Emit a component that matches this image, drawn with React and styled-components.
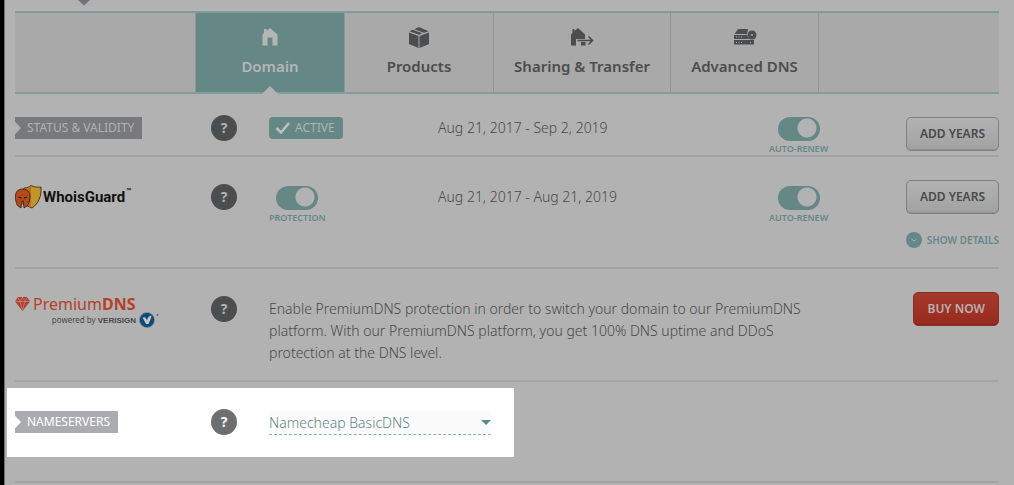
import styled, { createGlobalStyle } from 'styled-components';

const GlobalStyle = createGlobalStyle`
  * {
    box-sizing: border-box;
  }

  body {
    margin: 0;
    background-color: #b2b2b2;
    color: #48494b;
    font-family: 'Noto Sans', 'Open Sans', sans-serif;
    font-size: 14px;
    font-weight: 300;
    line-height: 22px;
  }
`;

const Page = styled.div`
  min-height: 100vh;
  padding: 0 15px 0 11px;
  border-left: 4px solid #000;
  box-shadow: inset 1px 0 0 #6e6e6e;
`;

const Header = styled.div`
  height: 11px;
  padding-left: 62px;

  svg {
    display: block;
  }
`;

const Tabs = styled.nav`
  display: grid;
  grid-template-columns: 181px 149px 149px 177px 148px 1fr;
  height: 83px;
  border-top: 2px solid #809b9a;
  border-bottom: 2px solid #809b9a;
  background-color: #a9a9a9;
`;

const Tab = styled.a`
  position: relative;
  display: flex;
  flex-direction: column;
  align-items: center;
  gap: 6px;
  padding-top: 12px;
  border-right: 1px solid #949696;
  background-color: ${({ $active }) => ($active ? '#658887' : 'transparent')};
  color: ${({ $active }) => ($active ? '#b4b6b6' : '#4c4d4f')};
  font-size: 15px;
  font-weight: 600;
  text-decoration: none;
  white-space: nowrap;

  &::after {
    content: '';
    display: ${({ $active }) => ($active ? 'block' : 'none')};
    position: absolute;
    bottom: -2px;
    border: 8px solid transparent;
    border-top: 0;
    border-bottom-color: #b2b2b2;
  }
`;

const TabIcon = styled.span`
  display: flex;
  align-items: center;
  height: 24px;
`;

const Row = styled.section`
  display: grid;
  grid-template-columns: ${({ $columns }) =>
    $columns || '196px 58px 169px 331px 1fr'};
  min-height: ${({ $height }) => $height};
  padding-top: ${({ $top }) => $top || '23px'};
  border-bottom: 2px solid #a4a4a4;
`;

const Cell = styled.div`
  display: flex;
  align-items: center;
  height: 34px;
`;

const Actions = styled.div`
  display: flex;
  flex-direction: column;
  align-items: flex-end;
  gap: 18px;
  padding-top: ${({ $top }) => $top || 0};
`;

const Side = styled.div`
  display: flex;
  justify-content: space-between;
`;

const Tag = styled.h2`
  margin: 0;
  padding: 0 8px 0 12px;
  background-color: ${({ $lit }) => ($lit ? '#abacb0' : '#78797c')};
  color: ${({ $lit }) => ($lit ? '#fff' : '#b2b2b2')};
  clip-path: polygon(0 0, 100% 0, 100% 100%, 0 100%, 0 78%, 6px 50%, 0 22%);
  font-size: 12px;
  font-weight: 400;
`;

const Help = styled.button`
  width: 26px;
  height: 26px;
  padding: 0;
  border: 0;
  border-radius: 50%;
  background-color: ${({ $lit }) => ($lit ? '#6d6e70' : '#4c4d4f')};
  color: ${({ $lit }) => ($lit ? '#fff' : '#b2b2b2')};
  font: 700 14px/26px 'Noto Sans', sans-serif;
`;

const Badge = styled.span`
  display: flex;
  align-items: center;
  gap: 4px;
  height: 22px;
  padding: 0 8px 0 6px;
  border-radius: 4px;
  background-color: #658887;
  color: #b2b2b2;
  font-size: 12px;
  font-weight: 400;
`;

const Switch = styled.label`
  display: flex;
  flex-direction: column;
  align-items: center;
  align-self: start;
  gap: 2px;
  width: max-content;
  padding-top: 6px;
  color: #658887;
  font-size: 9px;
  font-weight: 600;
  line-height: 12px;
`;

const SwitchInput = styled.input`
  appearance: none;
  width: 42px;
  height: 24px;
  margin: 0;
  border-radius: 12px;
  background: radial-gradient(circle at 29px 11px, #b2b2b2 9px, #658887 10px);
`;

const Button = styled.button`
  height: 34px;
  padding: 0 13px;
  border: ${({ $primary }) => ($primary ? '1px solid #8c2b20' : '1px solid #7f7f7f')};
  border-radius: 5px;
  background: ${({ $primary }) =>
    $primary
      ? 'linear-gradient(#a43a2c, #962a1e)'
      : 'linear-gradient(#b2b2b2, #a2a2a2)'};
  box-shadow: inset 0 -1px 0 rgba(0, 0, 0, 0.1);
  color: ${({ $primary }) => ($primary ? '#b8b0b0' : '#48494b')};
  font: 600 12px/28px 'Noto Sans', sans-serif;
`;

const DetailsButton = styled.button`
  display: flex;
  align-items: center;
  gap: 5px;
  height: 16px;
  padding: 0;
  border: 0;
  background: none;
  color: #658887;
  font: 600 10px 'Noto Sans', sans-serif;
`;

const Description = styled.p`
  max-width: 560px;
  margin: 0;
  padding-top: 6px;
`;

const GuardLogo = styled.div`
  display: flex;
  align-items: center;
  gap: 1px;
  color: #111;
  font: 700 15px/22px Roboto, sans-serif;

  sup {
    align-self: start;
    font-size: 8px;
    line-height: 14px;
  }
`;

const PremiumLogo = styled.div`
  width: 144px;
  padding-top: 6px;
  color: #b5402a;
  font-weight: 400;
`;

const PremiumName = styled.div`
  display: flex;
  align-items: center;
  gap: 3px;
  font-size: 16px;
  line-height: 16px;
`;

const PoweredBy = styled.div`
  display: flex;
  align-items: center;
  justify-content: flex-end;
  gap: 3px;
  height: 16px;
  color: #48494b;
  font-size: 8px;
  line-height: 16px;

  b {
    font-family: 'Liberation Sans', sans-serif;
  }
`;

const Spotlight = styled.div`
  display: grid;
  grid-template-columns: 196px 58px 222px;
  width: max-content;
  height: 69px;
  margin-left: -8px;
  padding: 17px 23px 0 8px;
  background-color: #fff;
`;

const LastRow = styled.section`
  height: 101px;
  padding-top: 6px;
  border-bottom: 2px solid #a4a4a4;
`;

const SelectWrap = styled.div`
  display: flex;
  align-items: center;
  align-self: start;
  height: 30px;
  padding-top: 6px;
  border-bottom: 1px dashed #8fb0ae;
  background: #fbfbfb content-box;
`;

const Select = styled.select`
  appearance: none;
  flex: 1;
  height: 22px;
  padding: 0;
  border: 0;
  background: none;
  color: #5d8886;
  font: 300 14px/22px 'Noto Sans', sans-serif;
`;

function HomeIcon() {
  return (
    <svg width='16' height='18' viewBox='0 0 16 18' fill='currentColor'>
      <path d='M8 0 15.500 6.500V17.500h-5V9.500h-5v8h-5V6.500L2 5V1h2.500v2z' />
    </svg>
  );
}

function BoxIcon() {
  return (
    <svg width='22' height='22' viewBox='0 0 22 22' fill='currentColor'>
      <path d='M1 6.500 10.500 10v12L1 18zM11.500 10 21 6.500V18l-9.500 4zM1.500 5.200 4.800 3.800l9.500 3.500-3.300 1.400zM6.200 3.200 11 1l9.500 4.200-4.500 1.600z' />
    </svg>
  );
}

function TransferIcon() {
  return (
    <svg width='24' height='18' viewBox='0 0 24 18' fill='currentColor'>
      <path d='M8 0 15 6.500V11H6v6.500H1v-11L2.500 5V1h2v2zM11 14h4.500v3.500H11z' />
      <path d='M7.500 12.500h15M18.500 8.500l4 4-4 4' fill='none' stroke='currentColor' strokeWidth='1.600' />
    </svg>
  );
}

function ServerIcon() {
  return (
    <svg width='24' height='18' viewBox='0 0 24 18' fill='currentColor'>
      <path d='M5 1h10l-1 5H1.500zM1 7h13l2 4H1zM1 12h20v4.500H1z' />
      <circle cx='19' cy='7' r='4.500' />
      <circle cx='19' cy='7' r='1' fill='#a9a9a9' />
      <path d='M3 9h6M3 14.500h6M17 14.500h2' stroke='#a9a9a9' strokeWidth='1' strokeDasharray='1 1.500' />
    </svg>
  );
}

function ShieldMark() {
  return (
    <svg width='27' height='24' viewBox='0 0 27 24' stroke='#2a1c10' strokeWidth='.8'>
      <path d='M9 3c3 0 5-1 7-2.500 3 1.500 6 2 10 1.500.5 9-2 16-9 21L8 19z' fill='#c2952a' />
      <path d='M16 1.200V22l-7-3V3.400c3 0 5-.8 7-2.200z' fill='#b9701f' stroke='none' />
      <path d='M7.500 4C3 4 .5 7 .5 11c0 4 .5 7 2 9.500L6 23l.8-7h1.400L9 23l3.500-2.500c1.500-2.500 2.500-5.500 2.500-9.500 0-4-3-7-7.500-7z' fill='#b44a18' />
      <path d='M3.500 12.500c1.200-.3 2.200 0 3 1M12 12.500c-1.200-.3-2.200 0-3 1' fill='none' strokeWidth='1.200' />
    </svg>
  );
}

function Gem() {
  return (
    <svg width='15' height='14' viewBox='0 0 15 14' fill='currentColor'>
      <path d='M3 0h9l3 4.500L7.500 14 0 4.500z' />
      <path d='M0 4.500h15M3 .5l2 4 2.500 8 2.500-8 2-4M5 4.500 7.500.5 10 4.500' fill='none' stroke='#b2b2b2' strokeWidth='.5' />
    </svg>
  );
}

function VerisignMark() {
  return (
    <svg width='20' height='16' viewBox='0 0 20 16'>
      <circle cx='8' cy='8' r='7.600' fill='#0f4a74' stroke='#888f94' strokeWidth='.8' />
      <path d='M3.500 5.500h3l1.500 3c.5-3 2-4.500 4.500-5-.5 3-1.500 5.500-3 8.500H7z' fill='#c4c8ca' />
      <circle cx='18.500' cy='3' r='1' fill='#5d5e60' />
    </svg>
  );
}

function HelpButton({ topic, lit }) {
  return (
    <Cell>
      <Help type='button' $lit={lit} aria-label={`Help: ${topic}`}>
        ?
      </Help>
    </Cell>
  );
}

function Toggle({ label }) {
  return (
    <Switch>
      <SwitchInput type='checkbox' role='switch' defaultChecked />
      {label}
    </Switch>
  );
}

export default function App() {
  return (
    <>
      <GlobalStyle />
      <Page>
        <Header>
          <svg width='14' height='6' viewBox='0 0 14 6'>
            <path d='M1 0h12L7 5.500z' fill='#727376' />
          </svg>
        </Header>
        <Tabs>
          <Tab as='span' />
          <Tab href='#domain' $active>
            <TabIcon>
              <HomeIcon />
            </TabIcon>
            Domain
          </Tab>
          <Tab href='#products'>
            <TabIcon>
              <BoxIcon />
            </TabIcon>
            Products
          </Tab>
          <Tab href='#sharing'>
            <TabIcon>
              <TransferIcon />
            </TabIcon>
            Sharing &amp; Transfer
          </Tab>
          <Tab href='#dns'>
            <TabIcon>
              <ServerIcon />
            </TabIcon>
            Advanced DNS
          </Tab>
        </Tabs>

        <Row $height='63px' $top='17px'>
          <Cell>
            <Tag>STATUS &amp; VALIDITY</Tag>
          </Cell>
          <HelpButton topic='status' />
          <Cell>
            <Badge>
              <svg width='16' height='14' viewBox='0 0 16 14' fill='none'>
                <path d='m1.500 7 4.500 4.500L14 2' stroke='#c0c2c2' strokeWidth='2.500' />
              </svg>
              ACTIVE
            </Badge>
          </Cell>
          <Cell>Aug 21, 2017 - Sep 2, 2019</Cell>
          <Side>
            <Toggle label='AUTO-RENEW' />
            <Actions $top='6px'>
              <Button type='button'>ADD YEARS</Button>
            </Actions>
          </Side>
        </Row>

        <Row $height='112px'>
          <Cell>
            <GuardLogo>
              <ShieldMark />
              WhoisGuard
              <sup>™</sup>
            </GuardLogo>
          </Cell>
          <HelpButton topic='WhoisGuard' />
          <Toggle label='PROTECTION' />
          <Cell>Aug 21, 2017 - Aug 21, 2019</Cell>
          <Side>
            <Toggle label='AUTO-RENEW' />
            <Actions>
              <Button type='button'>ADD YEARS</Button>
              <DetailsButton type='button'>
                <svg width='16' height='16' viewBox='0 0 16 16' fill='none'>
                  <circle cx='8' cy='8' r='8' fill='#658887' />
                  <path d='m5.500 7 2.500 2L10.500 7' stroke='#b2b2b2' />
                </svg>
                SHOW DETAILS
              </DetailsButton>
            </Actions>
          </Side>
        </Row>

        <Row $height='113px' $columns='196px 58px 1fr auto'>
          <Cell>
            <PremiumLogo>
              <PremiumName>
                <Gem />
                <span>
                  Premium<b>DNS</b>
                </span>
              </PremiumName>
              <PoweredBy>
                <span>
                  powered by <b>VERISIGN</b>
                </span>
                <VerisignMark />
              </PoweredBy>
            </PremiumLogo>
          </Cell>
          <HelpButton topic='PremiumDNS' />
          <Description>
            Enable PremiumDNS protection in order to switch your domain to our
            PremiumDNS platform. With our PremiumDNS platform, you get 100% DNS
            uptime and DDoS protection at the DNS level.
          </Description>
          <Actions>
            <Button type='button' $primary>
              BUY NOW
            </Button>
          </Actions>
        </Row>

        <LastRow>
          <Spotlight>
            <Cell>
              <Tag $lit>NAMESERVERS</Tag>
            </Cell>
            <HelpButton topic='nameservers' lit />
            <SelectWrap>
              <Select aria-label='Nameservers'>
                <option>Namecheap BasicDNS</option>
              </Select>
              <svg width='10' height='6' viewBox='0 0 10 6'>
                <path d='M0 0h10L5 5z' fill='#5d8a88' />
              </svg>
            </SelectWrap>
          </Spotlight>
        </LastRow>
      </Page>
    </>
  );
}
